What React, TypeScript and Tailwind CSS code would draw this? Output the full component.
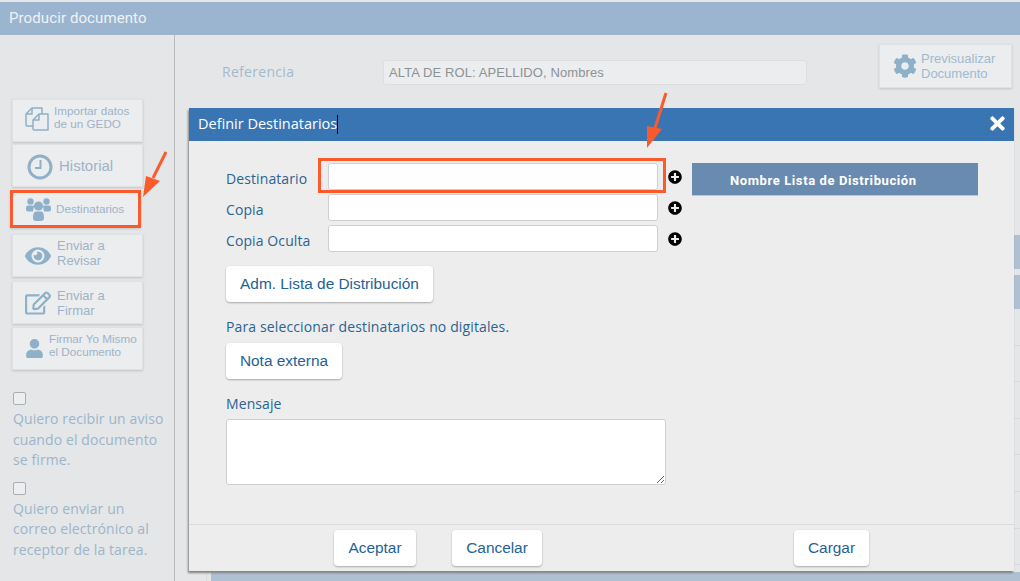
import type { ReactNode } from 'react';
import { FaCog, FaEye, FaPlusCircle, FaRegEdit, FaTimes, FaUser } from 'react-icons/fa';

const arial = 'font-["Liberation_Sans",Arial,sans-serif]';
const open = 'font-["Open_Sans",sans-serif]';

function FilesIcon() {
  return (
    <svg width="24" height="24" viewBox="0 0 24 24" fill="none" stroke="currentColor" strokeWidth="1.5" strokeLinejoin="round">
      <path d="M17 7V1H7L1 7v11q0 1 1 1h6" />
      <path d="M7 1v6H1" />
      <path d="M14 7h9v16H9q-1 0-1-1V13Z" fill="#ebedef" />
      <path d="M14 7v6H8" />
    </svg>
  );
}

function ClockIcon() {
  return (
    <svg width="26" height="26" viewBox="0 0 26 26" fill="none" stroke="currentColor">
      <circle cx="13" cy="13" r="11" strokeWidth="3" />
      <path d="M13.5 6v8H8" strokeWidth="2" />
    </svg>
  );
}

function GroupIcon() {
  return (
    <svg width="25" height="23" viewBox="0 0 25 23" fill="currentColor">
      <circle cx="4.5" cy="3.5" r="3.2" />
      <circle cx="20.5" cy="3.5" r="3.2" />
      <path d="M0 9.5q0-2 2-2h5q1 0 1 1l-1 5H2q-2 0-2-2Z" />
      <path d="M25 9.5q0-2-2-2h-5q-1 0-1 1l1 5h5q2 0 2-2Z" />
      <circle cx="12.5" cy="8" r="4.6" />
      <path d="M7 20q0-6 2.5-6.5h6Q18 14 18 20q0 3-3 3h-5q-3 0-3-3Z" />
    </svg>
  );
}

function SideButton({ icon, iconBox, text, className = '' }: { icon: ReactNode; iconBox: string; text: ReactNode; className?: string }) {
  return (
    <div className={`flex w-[131px] items-center border bg-[#ebedef] text-[#9fb3c8] shadow-[0_1px_2px_#c2c4c6] ${arial} ${className}`}>
      <div className={`shrink-0 text-[#8fb0c9] ${iconBox}`}>{icon}</div>
      {text}
    </div>
  );
}

function NoticeCheck({ lines }: { lines: string[] }) {
  return (
    <div className={`text-[14px] leading-[20.5px] tracking-[0.1px] text-[#9db5cb] ${open}`}>
      <div className="h-[13px] w-[13px] rounded-[2px] border border-[#a9aeb3] bg-[#eceef0]" />
      <div className="mt-[4px]">
        {lines.map((l) => (
          <div key={l}>{l}</div>
        ))}
      </div>
    </div>
  );
}

function PillButton({ children, className = '' }: { children: ReactNode; className?: string }) {
  return (
    <div className={`flex h-[36px] items-center justify-center rounded-[4px] bg-white text-[15.4px] text-[#1f6294] shadow-[0_1px_2px_#a9a9a9] ${arial} ${className}`}>
      {children}
    </div>
  );
}

function FieldRow({ label }: { label: string }) {
  return (
    <div className="flex h-[31px] items-center">
      <div className={`w-[102px] pt-[3px] text-[14px] tracking-[0.1px] text-[#2b6391] ${open}`}>{label}</div>
      <div className="h-[27px] w-[330px] rounded-[3px] border border-[#cfcfcf] bg-white" />
      <FaPlusCircle className="ml-[10px] text-[14px] text-black" />
    </div>
  );
}

function Arrow({ className, d, head }: { className: string; d: string; head: string }) {
  return (
    <svg className={`absolute ${className}`} viewBox="0 0 40 70" width="40" height="70" fill="#fb5a2c" stroke="#fb5a2c">
      <path d={d} strokeWidth="3" fill="none" />
      <polygon points={head} strokeWidth="0" />
    </svg>
  );
}

export default function App() {
  return (
    <div className="relative h-[581px] w-[1020px] overflow-hidden bg-[#e4e6e8]">
      <div className="h-[2px]" />
      <div className={`flex h-[33px] items-center bg-[#9bb4cf] pl-[9px] text-[15px] tracking-[0.1px] text-[#eef2f6] font-["Roboto",sans-serif]`}>
        Producir documento
      </div>
      <div className="flex h-[546px]">
        {/* barra lateral */}
        <aside className="h-full w-[175px] shrink-0 border-r border-[#b9bbbd] pl-[12px] pt-[64px]">
          <div className="flex flex-col">
            <SideButton
              className="h-[43px] border-[#dfe1e3]"
              icon={<FilesIcon />}
              iconBox="w-[41px] pl-[12px] pb-[3px]"
              text={<div className="pb-[7px] text-[11.7px] leading-[13px]">Importar datos<br />de un GEDO</div>}
            />
            <SideButton
              className="mt-[2px] h-[43px] border-[#dfe1e3]"
              icon={<ClockIcon />}
              iconBox="w-[46px] pl-[14px] pt-[2px]"
              text={<div className="pt-[2px] text-[15px]">Historial</div>}
            />
            <SideButton
              className="mt-[3px] h-[38px] -translate-x-[2px] border-[3px] border-[#fb5a2c] pl-[1px]"
              icon={<GroupIcon />}
              iconBox="w-[42px] pl-[12px]"
              text={<div className="text-[11.7px]">Destinatarios</div>}
            />
            <SideButton
              className="mt-[6px] h-[43px] border-[#dfe1e3]"
              icon={<FaEye className="text-[26px]" />}
              iconBox="w-[44px] pl-[12px]"
              text={<div className="pb-[5px] text-[13px] leading-[15px]">Enviar a<br />Revisar</div>}
            />
            <SideButton
              className="mt-[4px] h-[43px] border-[#dfe1e3]"
              icon={<FaRegEdit className="text-[26px]" />}
              iconBox="w-[44px] pl-[12px]"
              text={<div className="text-[13px] leading-[15px]">Enviar a<br />Firmar</div>}
            />
            <SideButton
              className="mt-[3px] h-[43px] border-[#dfe1e3]"
              icon={<FaUser className="text-[19px]" />}
              iconBox="w-[36px] pl-[12px]"
              text={<div className="pb-[8px] text-[11.7px] leading-[13px]">Firmar Yo Mismo<br />el Documento</div>}
            />
          </div>
          <div className="ml-[1px] mt-[22px] flex flex-col gap-[11px]">
            <NoticeCheck lines={['Quiero recibir un aviso', 'cuando el documento', 'se firme.']} />
            <NoticeCheck lines={['Quiero enviar un', 'correo electrónico al', 'receptor de la tarea.']} />
          </div>
        </aside>

        {/* contenido detras del modal */}
        <main className="min-w-0 flex-1">
          <div className="flex h-[64px] pl-[47px]">
            <div className={`w-[161px] pt-[26px] text-[14px] tracking-[0.3px] text-[#a6bacb] ${open}`}>Referencia</div>
            <div className={`mt-[25px] flex h-[25px] w-[424px] items-center rounded-[3px] border border-[#dcdee0] bg-[#ebedef] pl-[5px] text-[13px] tracking-[0.1px] text-[#8d9296] ${arial}`}>
              ALTA DE ROL: APELLIDO, Nombres
            </div>
            <div className={`ml-[72px] mt-[9px] flex h-[44px] w-[133px] items-center border border-[#dfe1e3] bg-[#ebedef] pl-[13px] text-[13px] leading-[15px] text-[#9fbad0] shadow-[0_1px_2px_#c2c4c6] ${arial}`}>
              <FaCog className="mr-[4px] shrink-0 text-[24px] text-[#8fb0c9]" />
              <div>Previsualizar<br />Documento</div>
            </div>
          </div>
          <div className="ml-[31px] mt-[136px] border-l border-[#d8dadc] pl-[4px]">
            <div className="h-[34px] bg-[#afc0d3]" />
            <div className="mt-[6px] h-[34px] bg-[#afc0d3]" />
            {[0, 1, 2, 3, 4, 5, 6].map((i) => (
              <div key={i} className="h-[36.6px] border-b border-[#d8dadc]" />
            ))}
            <div className="mt-[7px] h-[12px] bg-[#afc0d3]" />
          </div>
        </main>
      </div>

      {/* modal Definir Destinatarios */}
      <div className="absolute left-[189px] top-[108px] flex h-[463px] w-[825px] flex-col bg-[#ededed] shadow-[-1px_2px_2px_#808080]">
        <div className={`flex h-[33px] shrink-0 items-center justify-between bg-[#3a75b3] pb-[1px] pl-[9px] pr-[6px] text-[14.5px] text-white ${open}`}>
          <div className="flex items-center">
            Definir Destinatarios
            <span className="h-[19px] w-px bg-black" />
          </div>
          <FaTimes className="mb-[2px] text-[21px]" />
        </div>
        <div className="flex min-h-0 flex-1 pl-[37px] pt-[20px]">
          <div className="w-[466px] shrink-0">
            <FieldRow label="Destinatario" />
            <FieldRow label="Copia" />
            <FieldRow label="Copia Oculta" />
            <PillButton className="mt-[12px] w-[207px]">Adm. Lista de Distribución</PillButton>
            <div className={`mt-[14px] text-[14px] tracking-[0.13px] text-[#2b6391] ${open}`}>Para seleccionar destinatarios no digitales.</div>
            <PillButton className="mt-[6px] w-[116px]">Nota externa</PillButton>
            <div className={`mt-[14px] text-[14px] tracking-[0.1px] text-[#2b6391] ${open}`}>Mensaje</div>
            <textarea className="mt-[5px] block h-[66px] w-[440px] rounded-[3px] border border-[#cfcfcf] bg-white" />
          </div>
          <div className={`mt-[2px] h-[33px] w-[286px] border-b border-[#bcc6d2] bg-[#6a8bb0] pl-[38px] pt-[10px] text-[13px] font-bold leading-[15px] tracking-[0.6px] text-white font-["Roboto",sans-serif]`}>
            Nombre Lista de Distribución
          </div>
        </div>
        <div className="flex h-[47px] shrink-0 items-start border-t border-[#dcdcdc] pl-[145px] pt-[5px]">
          <PillButton className="w-[82px]">Aceptar</PillButton>
          <PillButton className="ml-[36px] w-[90px]">Cancelar</PillButton>
          <PillButton className="ml-[252px] w-[75px]">Cargar</PillButton>
        </div>
      </div>

      {/* resaltados de la captura */}
      <div className="absolute left-[318px] top-[158px] h-[35px] w-[348px] border-[3px] border-[#fb5a2c]" />
      <Arrow className="left-[130px] top-[148px]" d="M36 4 L23 30" head="13,49 16,28 30,33" />
      <Arrow className="left-[633px] top-[91px]" d="M33 2 L22 37" head="14,57 14,35 29,38" />
    </div>
  );
}
